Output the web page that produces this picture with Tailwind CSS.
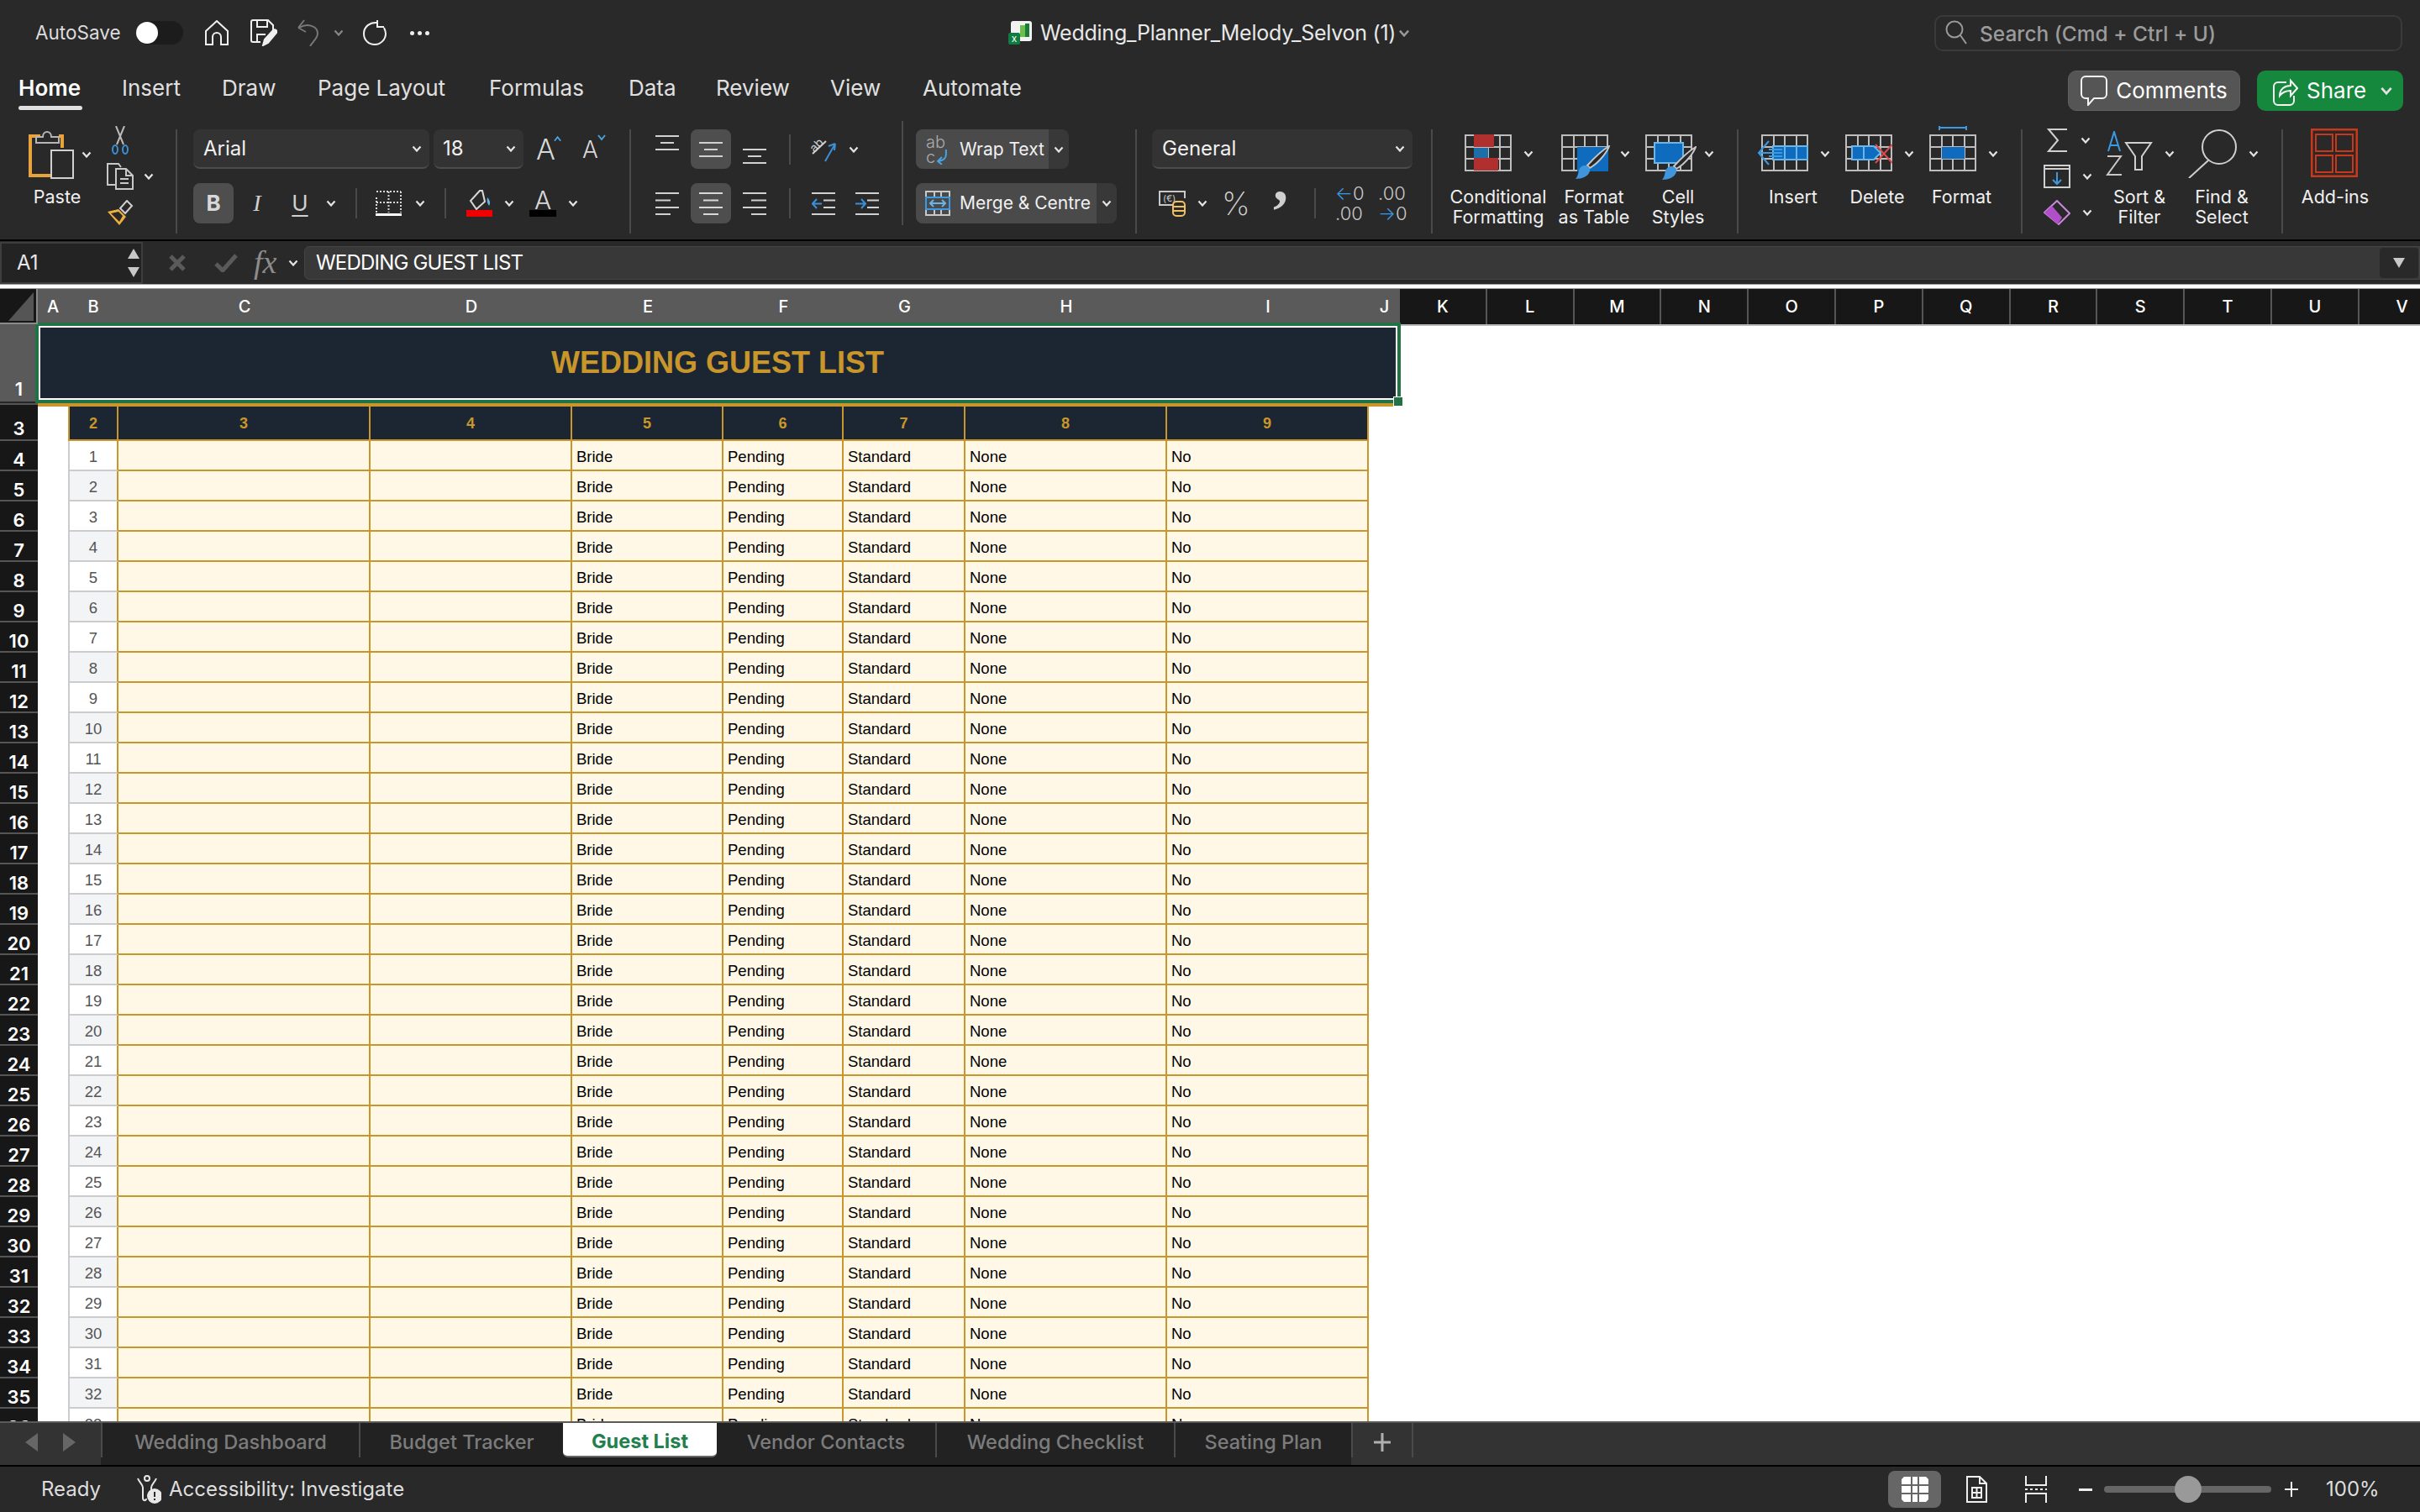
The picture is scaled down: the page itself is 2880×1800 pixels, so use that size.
<!DOCTYPE html>
<html lang="en">
<head>
<meta charset="utf-8">
<title>Wedding Planner</title>
<script src="https://cdn.jsdelivr.net/npm/@tailwindcss/browser@4"></script>
</head>
<body class="w-[2880px] h-[1800px] overflow-hidden bg-[#292929] text-[#e8e8e8] font-['Inter','Noto_Sans',sans-serif] [font-feature-settings:'calt'_0,'liga'_0]">
<svg class="hidden">
  <symbol id="chev" viewBox="0 0 12 8"><path d="M1.5 1.5 6 6.5l4.500-5" fill="none" stroke="#e4e4e4" stroke-width="2.200"/></symbol>
  <symbol id="grid" viewBox="0 0 56 44"><path d="M1 1h54v42H1zM1 15h54M1 29h54M15 1v42M28 1v42M42 1v42" fill="none" stroke="#bdbdbd" stroke-width="2"/></symbol>
  <symbol id="brush" viewBox="0 0 42 40"><path d="M41 1C39 7 30 20 18 27l-3-3C25 13 36 4 41 1z" fill="#292929" stroke="#c8c8c8" stroke-width="2"/><path d="M12 24c4 0 7 3 6 7-2 6-9 9-17 9 3-3 3-7 4-10 1-4 4-6 7-6z" fill="#3f96dc"/></symbol>
  <symbol id="alTop" viewBox="0 0 28 18"><path d="M0 1h28M6 9h16M0 17h28" stroke="#d0d0d0" stroke-width="2"/></symbol>
  <symbol id="alL" viewBox="0 0 28 27"><path d="M0 1h28M0 9.500h18M0 18h28M0 26h18" stroke="#d0d0d0" stroke-width="2"/></symbol>
  <symbol id="alC" viewBox="0 0 28 27"><path d="M0 1h28M5 9.500h18M0 18h28M5 26h18" stroke="#d8d8d8" stroke-width="2"/></symbol>
  <symbol id="alR" viewBox="0 0 28 27"><path d="M0 1h28M10 9.500h18M0 18h28M10 26h18" stroke="#d0d0d0" stroke-width="2"/></symbol>
</svg>

<div class="flex flex-col w-full h-full">

<!-- Title bar -->
<div class="flex items-center h-[78px] shrink-0">
  <div class="flex items-center w-[1200px] shrink-0">
    <span class="ml-[42px] w-[120px] text-[22.500px] text-[#dcdcdc]">AutoSave</span>
    <div class="w-[56px] h-[28px] rounded-full bg-[#1c1c1c] flex items-center"><div class="w-[26px] h-[26px] rounded-full bg-white"></div></div>
    <svg class="ml-[26px] w-[28px] h-[30px]" viewBox="0 0 28 30" fill="none" stroke="#f0f0f0" stroke-width="2"><path d="M1 13 14 1l13 12v16h-8v-9a5 5 0 0 0-10 0v9H1z"/></svg>
    <svg class="ml-[26px] w-[32px] h-[32px]" viewBox="0 0 32 32" fill="none" stroke="#f0f0f0" stroke-width="2"><path d="M12 27H3a2 2 0 0 1-2-2V3a2 2 0 0 1 2-2h18l6 6v7"/><path d="M8 1v8h12V1M8 27v-9h10"/><path d="M15 31l2-7 10-11c3-2 5 1 4 3L21 28z" fill="#f0f0f0"/></svg>
    <svg class="ml-[24px] w-[26px] h-[32px]" viewBox="0 0 26 32" fill="none" stroke="#777" stroke-width="2"><path d="M1 10 8 1M1 10l9 5M2 10c10-6 22-2 22 7 0 5-5 9-9 15"/></svg>
    <svg class="ml-[17px] w-[12px] h-[8px] opacity-50"><use href="#chev"/></svg>
    <svg class="ml-[23px] w-[28px] h-[30px]" viewBox="0 0 28 30" fill="none" stroke="#f0f0f0" stroke-width="2"><path d="M17 3C8 2 1 8 1 16s6 13 13 13 13-6 13-13c0-3-1-5-2-7M17 0v8h8"/></svg>
    <span class="ml-[28px] flex gap-[4px]"><i class="block w-[5px] h-[5px] rounded-full bg-[#eee]"></i><i class="block w-[5px] h-[5px] rounded-full bg-[#eee]"></i><i class="block w-[5px] h-[5px] rounded-full bg-[#eee]"></i></span>
  </div>
  <svg class="w-[30px] h-[28px]" viewBox="0 0 30 28"><rect x="3" y="0" width="25" height="24" rx="3" fill="#f2f2f2"/><path d="M14 5h6v14h-6z" fill="#6abf4b"/><path d="M20 3h5v16h-5z" fill="#1d7a3a"/><rect x="0" y="14" width="14" height="14" rx="2" fill="#107c41"/><text x="7" y="25" text-anchor="middle" font-size="12" fill="#fff" font-family="Liberation Sans">x</text></svg>
  <span class="ml-[8px] pt-[2px] text-[25px] tracking-[-0.25px] text-[#e8e8e8] whitespace-nowrap w-[426px]">Wedding_Planner_Melody_Selvon (1)</span>
  <svg class="w-[14px] h-[9px] opacity-60"><use href="#chev"/></svg>
  <div class="ml-[624px] w-[557px] h-[43px] rounded-[10px] border-2 border-[#3a3a3a] flex items-center">
    <svg class="ml-[11px] w-[27px] h-[30px]" viewBox="0 0 27 30" fill="none" stroke="#9a9a9a" stroke-width="2"><circle cx="11" cy="11" r="9.500"/><path d="m18 18 7 10"/></svg>
    <span class="ml-[14px] pt-[3px] text-[24.500px] font-medium text-[#9b9b9b] whitespace-nowrap">Search (Cmd + Ctrl + U)</span>
  </div>
</div>

<!-- Ribbon tabs -->
<div class="flex items-start h-[66px] shrink-0 text-[26px] leading-[36px] text-[#e0e0e0]">
  <div class="mt-[9px] ml-[22px] w-[123px] relative font-semibold text-white">Home<div class="absolute left-0 top-[39px] w-[76px] h-[5px] rounded-full bg-[#e0e0e0]"></div></div>
  <div class="mt-[9px] w-[119px]">Insert</div>
  <div class="mt-[9px] w-[114px]">Draw</div>
  <div class="mt-[9px] w-[204px]">Page Layout</div>
  <div class="mt-[9px] w-[166px]">Formulas</div>
  <div class="mt-[9px] w-[104px]">Data</div>
  <div class="mt-[9px] w-[136px]">Review</div>
  <div class="mt-[9px] w-[110px]">View</div>
  <div class="mt-[9px] w-[1363px]">Automate</div>
  <div class="mt-[6px] w-[205px] h-[48px] rounded-[10px] bg-[#555] border border-[#5f5f5f] flex items-center justify-center gap-[10px] text-white">
    <svg class="w-[32px] h-[36px]" viewBox="0 0 32 36" fill="none" stroke="#f2f2f2" stroke-width="2"><path d="M6 1h20a5 5 0 0 1 5 5v16a5 5 0 0 1-5 5h-10l-7 8v-8H6a5 5 0 0 1-5-5V6a5 5 0 0 1 5-5z"/></svg>
    <span>Comments</span>
  </div>
  <div class="mt-[6px] ml-[20px] w-[174px] h-[48px] rounded-[10px] bg-[#15883e] flex items-center pl-[19px] text-white">
    <svg class="w-[30px] h-[36px]" viewBox="0 0 30 36" fill="none" stroke="#f4f4f4" stroke-width="2"><path d="M16 8H6a5 5 0 0 0-5 5v17a5 5 0 0 0 5 5h14a5 5 0 0 0 5-5v-6"/><path d="M8 24c0-8 6-12 13-12V6l8 9-8 9v-6c-6 0-10 2-13 6z"/></svg>
    <span class="ml-[10px]">Share</span>
    <svg class="ml-[16px] w-[16px] h-[10px]"><use href="#chev"/></svg>
  </div>
</div>

<!-- Ribbon -->
<div class="flex h-[141px] shrink-0 text-[21.500px] text-[#f0f0f0] leading-[24px]">

  <!-- Clipboard -->
  <div class="w-[209px] shrink-0 flex pt-[10px]">
    <div class="w-[118px] shrink-0">
      <div class="flex items-center">
        <svg class="ml-[34px] w-[54px] h-[59px]" viewBox="0 0 54 59" fill="none"><path d="M14 8H2v47h26" stroke="#e8a33d" stroke-width="4"/><path d="M36 8h4v14" stroke="#e8a33d" stroke-width="4"/><path d="M9 16V9h8c0-8 10-8 10 0h9v7z" stroke="#b5b5b5" stroke-width="2"/><rect x="27" y="25" width="26" height="33" fill="#292929" stroke="#d0d0d0" stroke-width="2"/></svg>
        <svg class="ml-[9px] w-[12px] h-[8px]"><use href="#chev"/></svg>
      </div>
      <div class="ml-[34px] w-[68px] mt-[9px] text-center">Paste</div>
    </div>
    <div class="flex flex-col pl-[9px]">
      <svg class="-mt-[4px] ml-[5px] w-[22px] h-[34px]" viewBox="0 0 22 34" fill="none" stroke-width="2"><path d="M6 0l9 22M16 0 7 22" stroke="#bbb"/><ellipse cx="5" cy="28" rx="3" ry="5" stroke="#3b8fd6"/><ellipse cx="17" cy="28" rx="3" ry="5" stroke="#3b8fd6"/></svg>
      <div class="mt-[10px] flex items-center">
        <svg class="w-[32px] h-[32px]" viewBox="0 0 32 32" fill="none" stroke="#c8c8c8" stroke-width="2"><path d="M14 26H1V1h13l3 4"/><path d="M11 7h12l8 8v16H11z" fill="#292929"/><path d="M16 19h10M16 24h10M23 7v8h8"/></svg>
        <svg class="ml-[12px] w-[12px] h-[8px]"><use href="#chev"/></svg>
      </div>
      <svg class="mt-[12px] w-[32px] h-[30px]" viewBox="0 0 32 30"><path d="M24 1l6 6-8 9-6-6z" fill="none" stroke="#d0d0d0" stroke-width="2"/><path d="M1 14l13-3 9 9-8 10z" fill="#f0b040"/><path d="M5 16l9-2 5 5-4 7z" fill="#292929"/></svg>
    </div>
  </div>
  <div class="w-[2px] h-[124px] mt-[10px] bg-[#4a4a4a] shrink-0"></div>

  <!-- Font -->
  <div class="w-[538px] shrink-0 pt-[10px] pl-[19px]">
    <div class="flex items-center h-[47px]">
      <div class="w-[281px] h-[47px] rounded-[8px] bg-[#333] border-b-2 border-[#4c4c4c] flex items-center justify-between pl-[12px] pr-[9px] text-[24px]"><span>Arial</span><svg class="w-[12px] h-[8px]"><use href="#chev"/></svg></div>
      <div class="ml-[5px] w-[107px] h-[47px] rounded-[8px] bg-[#333] border-b-2 border-[#4c4c4c] flex items-center justify-between pl-[11px] pr-[9px] text-[24px]"><span>18</span><svg class="w-[12px] h-[8px]"><use href="#chev"/></svg></div>
      <div class="ml-[15px] w-[30px] flex items-start"><span class="text-[34px] leading-[34px] font-light text-[#d8d8d8]">A</span><svg class="-ml-[2px] w-[10px] h-[8px]" viewBox="0 0 10 8" fill="none" stroke="#4aa3e0" stroke-width="2"><path d="M1 7l4-5 4 5"/></svg></div>
      <div class="ml-[25px] w-[30px] flex items-start"><span class="text-[28px] leading-[36px] font-light text-[#d8d8d8]">A</span><svg class="-ml-[1px] w-[10px] h-[8px]" viewBox="0 0 10 8" fill="none" stroke="#4aa3e0" stroke-width="2"><path d="M1 1l4 5 4-5"/></svg></div>
    </div>
    <div class="flex items-center h-[48px] mt-[17px]">
      <div class="w-[48px] h-[48px] rounded-[8px] bg-[#4e4e4e] flex items-center justify-center text-[26px] font-bold text-[#d8d8d8]">B</div>
      <div class="w-[56px] text-center font-['Liberation_Serif',serif] italic text-[28px] text-[#d0d0d0]">I</div>
      <div class="w-[46px] text-center text-[26px] underline underline-offset-[5px] text-[#d0d0d0]">U</div>
      <div class="w-[28px] flex justify-center"><svg class="w-[12px] h-[8px]"><use href="#chev"/></svg></div>
      <div class="ml-[15px] w-[2px] h-[36px] bg-[#4a4a4a]"></div>
      <svg class="ml-[22px] w-[31px] h-[30px]" viewBox="0 0 31 30" fill="none" stroke="#d8d8d8" stroke-width="2"><path d="M1 1h29M1 8v18M30 1v25M15.500 1v25M1 14h29" stroke-dasharray="2 2"/><path d="M0 28.500h31" stroke="#fff" stroke-width="3"/></svg>
      <div class="w-[44px] flex justify-center"><svg class="w-[12px] h-[8px]"><use href="#chev"/></svg></div>
      <div class="ml-[7px] w-[2px] h-[36px] bg-[#4a4a4a]"></div>
      <div class="ml-[24px] w-[31px] flex flex-col items-center">
        <svg class="w-[28px] h-[24px]" viewBox="0 0 28 24" fill="none"><path d="M14 1l-11 12 7 10 10-9-3-13z" stroke="#d8d8d8" stroke-width="2"/><path d="M23 9c3 3 4 7 2 10-2-3-3-6-2-10z" fill="#6ab4e8"/></svg>
        <div class="w-[31px] h-[8px] bg-[#f00000]"></div>
      </div>
      <div class="w-[40px] flex justify-center"><svg class="w-[12px] h-[8px]"><use href="#chev"/></svg></div>
      <div class="ml-[4px] w-[32px] flex flex-col items-center">
        <span class="text-[30px] leading-[24px] font-light text-[#d8d8d8]">A</span>
        <div class="w-[32px] h-[8px] bg-black"></div>
      </div>
      <div class="w-[40px] flex justify-center"><svg class="w-[12px] h-[8px]"><use href="#chev"/></svg></div>
    </div>
  </div>
  <div class="w-[2px] h-[124px] mt-[10px] bg-[#4a4a4a] shrink-0"></div>

  <!-- Alignment -->
  <div class="w-[322px] shrink-0 pt-[10px] pl-[29px]">
    <div class="flex items-center h-[47px]">
      <svg class="w-[28px] h-[18px] -mt-[16px]"><use href="#alTop"/></svg>
      <div class="ml-[14px] w-[48px] h-[47px] rounded-[8px] bg-[#4e4e4e] flex items-center justify-center"><svg class="w-[28px] h-[18px]"><use href="#alTop"/></svg></div>
      <svg class="ml-[14px] w-[28px] h-[18px] mt-[16px]"><use href="#alTop"/></svg>
      <div class="ml-[27px] w-[2px] h-[36px] bg-[#4a4a4a]"></div>
      <svg class="ml-[23px] w-[32px] h-[30px]" viewBox="0 0 32 30" fill="none"><path d="M3 20 19 5" stroke="#d0d0d0" stroke-width="2"/><text x="1" y="15" font-size="14" fill="#d0d0d0" transform="rotate(-45 8 12)" font-family="Inter">ab</text><path d="M30 8 18 29M30 8l-1 8M30 8l-8 3" stroke="#3b8fd6" stroke-width="2"/></svg>
      <svg class="ml-[14px] w-[12px] h-[8px]"><use href="#chev"/></svg>
    </div>
    <div class="flex items-center h-[48px] mt-[17px]">
      <svg class="w-[28px] h-[27px]"><use href="#alL"/></svg>
      <div class="ml-[14px] w-[48px] h-[48px] rounded-[8px] bg-[#4e4e4e] flex items-center justify-center"><svg class="w-[28px] h-[27px]"><use href="#alC"/></svg></div>
      <svg class="ml-[14px] w-[28px] h-[27px]"><use href="#alR"/></svg>
      <div class="ml-[27px] w-[2px] h-[36px] bg-[#4a4a4a]"></div>
      <svg class="ml-[25px] w-[28px] h-[27px]" viewBox="0 0 28 27" fill="none" stroke-width="2"><path d="M0 1h28M14 9.500h14M14 18h14M0 26h28" stroke="#d0d0d0"/><path d="M12 13.500H1M6 8l-5 5.500L6 19" stroke="#3b8fd6"/></svg>
      <svg class="ml-[24px] w-[28px] h-[27px]" viewBox="0 0 28 27" fill="none" stroke-width="2"><path d="M0 1h28M14 9.500h14M14 18h14M0 26h28" stroke="#d0d0d0"/><path d="M0 13.500h11M7 8l5 5.500L7 19" stroke="#3b8fd6"/></svg>
    </div>
  </div>
  <div class="w-[2px] h-[124px] bg-[#4a4a4a] shrink-0"></div>

  <!-- Wrap / merge -->
  <div class="w-[276px] shrink-0 pt-[10px] pl-[15px]">
    <div class="flex h-[47px] w-[182px] rounded-[8px] overflow-hidden">
      <div class="w-[158px] bg-[#4a4a4a] flex items-center pl-[12px]">
        <div class="w-[28px] text-[20px] leading-[18px] text-[#aaa] font-light"><div>ab</div><div class="flex">c<svg class="ml-[1px] w-[16px] h-[18px]" viewBox="0 0 16 18" fill="none" stroke="#4aa3e0" stroke-width="2"><path d="M12 0v6c0 5-3 7-9 8M7 9 2 14l5 4"/></svg></div></div>
        <span class="ml-[12px] text-[21px] whitespace-nowrap">Wrap Text</span>
      </div>
      <div class="w-[24px] bg-[#383838] flex items-center justify-center"><svg class="w-[12px] h-[8px]"><use href="#chev"/></svg></div>
    </div>
    <div class="flex h-[48px] w-[239px] rounded-[8px] overflow-hidden mt-[17px]">
      <div class="w-[215px] bg-[#4a4a4a] flex items-center pl-[11px]">
        <svg class="w-[30px] h-[30px] shrink-0" viewBox="0 0 30 30" fill="none" stroke-width="2"><path d="M1 1h28v28H1zM1 8h28M1 22h28M11 1v7M19 1v7M11 22v7M19 22v7" stroke="#c8c8c8"/><rect x="1" y="8" width="28" height="14" stroke="#3b9ae1"/><path d="M6 15h18M10 11l-4 4 4 4M20 11l4 4-4 4" stroke="#6ab4e8"/></svg>
        <span class="ml-[11px] text-[21px] whitespace-nowrap">Merge &amp; Centre</span>
      </div>
      <div class="w-[24px] bg-[#383838] flex items-center justify-center"><svg class="w-[12px] h-[8px]"><use href="#chev"/></svg></div>
    </div>
  </div>
  <div class="w-[2px] h-[124px] mt-[10px] bg-[#4a4a4a] shrink-0"></div>

  <!-- Number -->
  <div class="w-[350px] shrink-0 pt-[10px] pl-[18px]">
    <div class="w-[310px] h-[47px] rounded-[8px] bg-[#333] border-b-2 border-[#4c4c4c] flex items-center justify-between pl-[12px] pr-[9px] text-[24px]"><span>General</span><svg class="w-[12px] h-[8px]"><use href="#chev"/></svg></div>
    <div class="flex items-center h-[48px] mt-[17px]">
      <svg class="ml-[8px] w-[32px] h-[32px]" viewBox="0 0 32 32" fill="none" stroke-width="2"><path d="M18 18H1V2h30v8" stroke="#c8c8c8"/><text x="5" y="14" font-size="11" fill="#c8c8c8" font-family="Inter">(€)</text><rect x="17" y="14" width="14" height="17" rx="4" fill="#292929" stroke="#f0c060"/><path d="M17 20h14M17 25h14" stroke="#f0c060"/></svg>
      <svg class="ml-[14px] w-[12px] h-[8px]"><use href="#chev"/></svg>
      <span class="ml-[17px] w-[32px] text-[38px] leading-[38px] font-extralight text-[#d0d0d0]">%</span>
      <span class="ml-[29px] w-[18px] font-['Liberation_Serif',serif] font-bold text-[72px] leading-[40px] -translate-y-[27px] text-[#cfcfcf]">,</span>
      <div class="ml-[31px] w-[2px] h-[36px] bg-[#4a4a4a]"></div>
      <div class="ml-[23px] w-[32px] text-[22px] leading-[24px] font-light text-[#c8c8c8] text-right"><div><span class="text-[#3b9ae1]">←</span>0</div><div>.00</div></div>
      <div class="ml-[19px] w-[32px] text-[22px] leading-[24px] font-light text-[#c8c8c8] text-right"><div>.00</div><div><span class="text-[#3b9ae1]">→</span>0</div></div>
    </div>
  </div>
  <div class="w-[2px] h-[124px] mt-[10px] bg-[#4a4a4a] shrink-0"></div>

  <!-- Styles -->
  <div class="w-[362px] shrink-0 pt-[6px]">
    <div class="flex h-[72px]">
      <svg class="ml-[38px] mt-[10px] w-[56px] h-[44px]" viewBox="0 0 56 44"><use href="#grid" width="56" height="44"/><rect x="11" y="0" width="24" height="15" fill="#b03030"/><rect x="11" y="16" width="17" height="12" fill="#1d6fa8"/><rect x="11" y="28" width="29" height="15" fill="#b03030"/></svg>
      <svg class="ml-[14px] mt-[29px] w-[12px] h-[8px]"><use href="#chev"/></svg>
      <svg class="ml-[33px] mt-[10px] w-[66px] h-[54px]" viewBox="0 0 66 54"><svg width="56" height="44"><use href="#grid" width="56" height="44"/></svg><rect x="19" y="15" width="37" height="29" fill="#0e6bbd"/><use href="#brush" x="16" y="13" width="42" height="40"/></svg>
      <svg class="ml-[4px] mt-[29px] w-[12px] h-[8px]"><use href="#chev"/></svg>
      <svg class="ml-[18px] mt-[10px] w-[66px] h-[54px]" viewBox="0 0 66 54"><svg width="56" height="44"><use href="#grid" width="56" height="44"/></svg><rect x="11" y="10" width="34" height="24" fill="#0e6bbd" stroke="#6ab4e8" stroke-width="2"/><use href="#brush" x="19" y="14" width="42" height="40"/></svg>
      <svg class="ml-[4px] mt-[29px] w-[12px] h-[8px]"><use href="#chev"/></svg>
    </div>
    <div class="flex">
      <div class="ml-[20px] w-[116px] text-center">Conditional Formatting</div>
      <div class="w-[112px] text-center">Format<br>as Table</div>
      <div class="w-[88px] text-center">Cell<br>Styles</div>
    </div>
  </div>
  <div class="w-[2px] h-[124px] mt-[10px] bg-[#4a4a4a] shrink-0"></div>

  <!-- Cells -->
  <div class="w-[336px] shrink-0 pt-[6px]">
    <div class="flex h-[72px]">
      <svg class="ml-[27px] mt-[10px] w-[56px] h-[44px] overflow-visible" viewBox="0 0 56 44"><use href="#grid" width="56" height="44"/><rect x="14" y="14" width="41" height="16" fill="#0e6bbd" stroke="#6ab4e8" stroke-width="2"/><path d="M28 14v16M42 14v16" stroke="#6ab4e8" stroke-width="2"/><path d="M25 22H-2M9 8-3 22l12 14M9 18h16M9 26h16" fill="none" stroke="#3b9ae1" stroke-width="2"/></svg>
      <svg class="ml-[14px] mt-[29px] w-[12px] h-[8px]"><use href="#chev"/></svg>
      <svg class="ml-[18px] mt-[10px] w-[56px] h-[44px]" viewBox="0 0 56 44"><use href="#grid" width="56" height="44"/><path d="M8 14h26l8 8-8 8H8z" fill="#0e6bbd" stroke="#6ab4e8" stroke-width="2"/><path d="M22 14v16" stroke="#6ab4e8" stroke-width="2"/><path d="M36 12l20 22M56 12 36 34" stroke="#e04a4a" stroke-width="2"/></svg>
      <svg class="ml-[14px] mt-[29px] w-[12px] h-[8px]"><use href="#chev"/></svg>
      <svg class="ml-[18px] mt-[10px] w-[56px] h-[44px] overflow-visible" viewBox="0 0 56 44"><use href="#grid" width="56" height="44"/><rect x="15" y="15" width="27" height="14" fill="#0e6bbd"/><path d="M12-8h32M12-10v5M44-10v5" stroke="#3b9ae1" stroke-width="2"/></svg>
      <svg class="ml-[14px] mt-[29px] w-[12px] h-[8px]"><use href="#chev"/></svg>
    </div>
    <div class="flex pl-[15px]">
      <div class="w-[100px] text-center">Insert</div>
      <div class="w-[100px] text-center">Delete</div>
      <div class="w-[101px] text-center">Format</div>
    </div>
  </div>
  <div class="w-[2px] h-[124px] mt-[10px] bg-[#4a4a4a] shrink-0"></div>

  <!-- Editing -->
  <div class="w-[308px] shrink-0 flex pt-[6px]">
    <div class="w-[87px] shrink-0 pl-[25px]">
      <div class="flex items-center h-[34px]">
        <svg class="ml-[4px] w-[24px] h-[28px]" viewBox="0 0 24 28" fill="none" stroke="#d0d0d0" stroke-width="2"><path d="M24 1H2l11 13L2 27h22"/></svg>
        <svg class="ml-[16px] w-[12px] h-[8px]"><use href="#chev"/></svg>
      </div>
      <div class="flex items-center h-[28px] mt-[12px]">
        <svg class="w-[32px] h-[28px]" viewBox="0 0 32 28" fill="none" stroke-width="2"><path d="M1 1h30v26H1zM1 5h30" stroke="#d0d0d0"/><path d="M16 9v14M11 18l5 5 5-5" stroke="#3b9ae1"/></svg>
        <svg class="ml-[14px] w-[12px] h-[8px]"><use href="#chev"/></svg>
      </div>
      <div class="flex items-center h-[30px] mt-[14px]">
        <svg class="w-[32px] h-[30px]" viewBox="0 0 32 30"><path d="M16 1 31 16 18 29 1 15z" fill="none" stroke="#c78ad8" stroke-width="2"/><path d="M1 15l9-8 12 14-5 8z" fill="#b04fc8"/></svg>
        <svg class="ml-[14px] w-[12px] h-[8px]"><use href="#chev"/></svg>
      </div>
    </div>
    <div>
      <div class="flex h-[72px]">
        <svg class="ml-[12px] mt-[6px] w-[56px] h-[54px]" viewBox="0 0 56 54" fill="none" stroke-width="2"><path d="M3 24 10 1l7 23M5 17h10" stroke="#3b9ae1"/><path d="M2 30h16L2 52h17" stroke="#c8c8c8"/><path d="M24 14h30L43 30v16h-8V30z" stroke="#d0d0d0"/></svg>
        <svg class="ml-[14px] mt-[29px] w-[12px] h-[8px]"><use href="#chev"/></svg>
        <svg class="ml-[16px] mt-[4px] w-[58px] h-[58px]" viewBox="0 0 58 58" fill="none" stroke="#d0d0d0" stroke-width="2"><ellipse cx="37" cy="21" rx="20" ry="20"/><path d="M24 37 1 58"/></svg>
        <svg class="ml-[14px] mt-[29px] w-[12px] h-[8px]"><use href="#chev"/></svg>
      </div>
      <div class="flex">
        <div class="ml-[4px] w-[96px] text-center">Sort &amp;<br>Filter</div>
        <div class="w-[100px] text-center">Find &amp;<br>Select</div>
      </div>
    </div>
  </div>
  <div class="w-[2px] h-[124px] mt-[10px] bg-[#4a4a4a] shrink-0"></div>

  <!-- Add-ins -->
  <div class="pt-[9px]">
    <svg class="ml-[33px] w-[56px] h-[58px]" viewBox="0 0 56 58" fill="none" stroke="#c9381a" stroke-width="2"><rect x="1" y="1" width="54" height="56" stroke-width="3"/><rect x="6" y="7" width="20" height="20"/><rect x="30" y="7" width="20" height="20"/><rect x="6" y="32" width="20" height="20"/><rect x="30" y="32" width="20" height="20"/></svg>
    <div class="ml-[12px] w-[100px] mt-[11px] text-center">Add-ins</div>
  </div>
</div>

<div class="h-[2px] bg-black shrink-0"></div>

<!-- Formula bar -->
<div class="flex items-center h-[51px] shrink-0">
  <div class="w-[170px] h-[50px] border-2 border-[#3d3d3d] bg-[#232323] flex items-center justify-between pl-[18px] pr-[2px] text-[24px]">
    <span>A1</span>
    <div class="flex flex-col gap-[8px]">
      <svg class="w-[14px] h-[14px]" viewBox="0 0 14 14"><path d="M7 1 14 13H0z" fill="#c8c8c8"/></svg>
      <svg class="w-[14px] h-[14px]" viewBox="0 0 14 14"><path d="M7 13 14 1H0z" fill="#c8c8c8"/></svg>
    </div>
  </div>
  <svg class="ml-[31px] w-[20px] h-[20px]" viewBox="0 0 20 20" fill="none" stroke="#5a5a5a" stroke-width="5"><path d="M2 2l16 16M18 2 2 18"/></svg>
  <svg class="ml-[34px] w-[28px] h-[22px]" viewBox="0 0 28 22" fill="none" stroke="#5a5a5a" stroke-width="5"><path d="M2 12l8 8L26 2"/></svg>
  <span class="ml-[19px] w-[32px] font-['Liberation_Serif',serif] italic text-[38px] text-[#8c8c8c] whitespace-nowrap">fx</span>
  <svg class="ml-[9px] w-[12px] h-[8px]"><use href="#chev"/></svg>
  <div class="ml-[7px] flex-1 h-[40px] rounded-l-[6px] bg-[#383838] border border-[#444] flex items-center justify-between text-[24px] tracking-[-0.8px] text-white pl-[13px]">
    <span class="whitespace-nowrap">WEDDING GUEST LIST</span>
    <div class="w-[46px] h-[36px] mr-[1px] rounded-[4px] bg-[#292929] flex items-center justify-center"><svg class="w-[14px] h-[12px]" viewBox="0 0 14 12"><path d="M7 12 14 0H0z" fill="#c8c8c8"/></svg></div>
  </div>
</div>
<div class="h-[6px] shrink-0 bg-white border-y border-[#9c9c9c]"></div>

<!-- Sheet -->
<div class="flex-1 min-h-0 overflow-hidden bg-white">
  <!-- Column headers -->
  <div class="flex h-[40px] text-[20px] font-medium text-white text-center leading-[42px]">
    <div class="w-[45px] h-[42px] relative z-10 bg-[#171717] border-r-2 border-b-2 border-[#8a8a8a] flex items-end justify-end"><svg class="w-[30px] h-[34px] mb-[2px] mr-[3px]" viewBox="0 0 30 34"><path d="M30 0v34H0z" fill="#555"/></svg></div>
    <div class="flex bg-[#5a5a5a]">
      <div class="w-[36px]">A</div><div class="w-[60px]">B</div><div class="w-[300px]">C</div><div class="w-[240px]">D</div><div class="w-[180px]">E</div><div class="w-[143px]">F</div><div class="w-[145px]">G</div><div class="w-[240px]">H</div><div class="w-[240px]">I</div><div class="w-[37px]">J</div>
    </div>
    <div class="flex-1 h-[44px] flex bg-[#171717] border-b-[2px] border-[#b8b8b8] overflow-hidden [&>div]:shrink-0 [&>div]:w-[103.800px] [&>div]:border-r-2 [&>div]:border-[#555]">
      <div>K</div><div>L</div><div>M</div><div>N</div><div>O</div><div>P</div><div>Q</div><div>R</div><div>S</div><div>T</div><div>U</div><div>V</div>
    </div>
  </div>
  <div class="flex">
    <!-- Row headers -->
    <div class="w-[45px] shrink-0 text-[22px] font-semibold text-white text-center">
      <div class="h-[94px] bg-[#5a5a5a] flex items-end justify-center leading-[30px]">1</div>
      <div class="h-[4px] bg-[#262626] border-b-2 border-[#555]"></div>
      <div class="h-[43px] bg-[#171717] border-b-2 border-[#555] leading-[56px]">3</div>
      <div class="bg-[#171717] [&>div]:h-[36px] [&>div]:border-b-2 [&>div]:border-[#555] [&>div]:leading-[45px]">
        <div>4</div><div>5</div><div>6</div><div>7</div><div>8</div><div>9</div><div>10</div><div>11</div><div>12</div><div>13</div><div>14</div><div>15</div><div>16</div><div>17</div><div>18</div><div>19</div><div>20</div><div>21</div><div>22</div><div>23</div><div>24</div><div>25</div><div>26</div><div>27</div><div>28</div><div>29</div><div>30</div><div>31</div><div>32</div><div>33</div><div>34</div><div>35</div><div>36</div>
      </div>
    </div>
    <!-- Cells -->
    <div class="flex-1 min-w-0">
      <div class="relative w-[1621px] h-[100px] bg-[#1b2632] border-b-4 border-[#c8962a] flex items-center justify-center font-['Liberation_Sans',Arial,sans-serif] font-bold text-[36px] text-[#c8962a] pb-[1px] pr-[3px]">
        WEDDING GUEST LIST
        <div class="absolute -left-[3px] top-0 -right-[1px] bottom-0 border-4 border-[#217346]"><div class="w-full h-full border-2 border-white"></div></div>
        <div class="absolute -right-[4px] -bottom-[4px] w-[12px] h-[12px] bg-[#217346] border border-white"></div>
      </div>
      <table class="ml-[36px] w-[1548px] table-fixed border-separate border-spacing-0 font-['Liberation_Sans',Arial,sans-serif] text-[18.500px] text-black [&_td]:h-[36px] [&_td]:p-0 [&_td]:pt-[4px] [&_td]:pl-[5px] [&_td]:border-r-2 [&_td]:border-b-2 [&_td]:border-[#c8962a] [&_td]:bg-[#fff8e7] [&_td:first-child]:pl-0 [&_td:first-child]:text-center [&_td:first-child]:text-[#555] [&_td:first-child]:bg-white [&_td:first-child]:border-l-2 [&_td:first-child]:border-l-[#ccc] [&_td:first-child]:border-b-[#ccc] [&_tr:nth-child(even)_td:first-child]:bg-[#f3f4f6]">
        <colgroup><col class="w-[60px]"><col class="w-[300px]"><col class="w-[240px]"><col class="w-[180px]"><col class="w-[143px]"><col class="w-[145px]"><col class="w-[240px]"><col class="w-[240px]"></colgroup>
        <thead class="[&_th]:h-[41px] [&_th]:bg-[#1b2632] [&_th]:text-[#c8962a] [&_th]:border-r-2 [&_th]:border-b-2 [&_th]:border-[#c8962a] [&_th]:font-bold [&_th]:text-[18px] [&_th]:pt-[2px]">
          <tr><th class="border-l-2">2</th><th>3</th><th>4</th><th>5</th><th>6</th><th>7</th><th>8</th><th>9</th></tr>
        </thead>
        <tbody>
          <tr><td>1</td><td></td><td></td><td>Bride</td><td>Pending</td><td>Standard</td><td>None</td><td>No</td></tr>
          <tr><td>2</td><td></td><td></td><td>Bride</td><td>Pending</td><td>Standard</td><td>None</td><td>No</td></tr>
          <tr><td>3</td><td></td><td></td><td>Bride</td><td>Pending</td><td>Standard</td><td>None</td><td>No</td></tr>
          <tr><td>4</td><td></td><td></td><td>Bride</td><td>Pending</td><td>Standard</td><td>None</td><td>No</td></tr>
          <tr><td>5</td><td></td><td></td><td>Bride</td><td>Pending</td><td>Standard</td><td>None</td><td>No</td></tr>
          <tr><td>6</td><td></td><td></td><td>Bride</td><td>Pending</td><td>Standard</td><td>None</td><td>No</td></tr>
          <tr><td>7</td><td></td><td></td><td>Bride</td><td>Pending</td><td>Standard</td><td>None</td><td>No</td></tr>
          <tr><td>8</td><td></td><td></td><td>Bride</td><td>Pending</td><td>Standard</td><td>None</td><td>No</td></tr>
          <tr><td>9</td><td></td><td></td><td>Bride</td><td>Pending</td><td>Standard</td><td>None</td><td>No</td></tr>
          <tr><td>10</td><td></td><td></td><td>Bride</td><td>Pending</td><td>Standard</td><td>None</td><td>No</td></tr>
          <tr><td>11</td><td></td><td></td><td>Bride</td><td>Pending</td><td>Standard</td><td>None</td><td>No</td></tr>
          <tr><td>12</td><td></td><td></td><td>Bride</td><td>Pending</td><td>Standard</td><td>None</td><td>No</td></tr>
          <tr><td>13</td><td></td><td></td><td>Bride</td><td>Pending</td><td>Standard</td><td>None</td><td>No</td></tr>
          <tr><td>14</td><td></td><td></td><td>Bride</td><td>Pending</td><td>Standard</td><td>None</td><td>No</td></tr>
          <tr><td>15</td><td></td><td></td><td>Bride</td><td>Pending</td><td>Standard</td><td>None</td><td>No</td></tr>
          <tr><td>16</td><td></td><td></td><td>Bride</td><td>Pending</td><td>Standard</td><td>None</td><td>No</td></tr>
          <tr><td>17</td><td></td><td></td><td>Bride</td><td>Pending</td><td>Standard</td><td>None</td><td>No</td></tr>
          <tr><td>18</td><td></td><td></td><td>Bride</td><td>Pending</td><td>Standard</td><td>None</td><td>No</td></tr>
          <tr><td>19</td><td></td><td></td><td>Bride</td><td>Pending</td><td>Standard</td><td>None</td><td>No</td></tr>
          <tr><td>20</td><td></td><td></td><td>Bride</td><td>Pending</td><td>Standard</td><td>None</td><td>No</td></tr>
          <tr><td>21</td><td></td><td></td><td>Bride</td><td>Pending</td><td>Standard</td><td>None</td><td>No</td></tr>
          <tr><td>22</td><td></td><td></td><td>Bride</td><td>Pending</td><td>Standard</td><td>None</td><td>No</td></tr>
          <tr><td>23</td><td></td><td></td><td>Bride</td><td>Pending</td><td>Standard</td><td>None</td><td>No</td></tr>
          <tr><td>24</td><td></td><td></td><td>Bride</td><td>Pending</td><td>Standard</td><td>None</td><td>No</td></tr>
          <tr><td>25</td><td></td><td></td><td>Bride</td><td>Pending</td><td>Standard</td><td>None</td><td>No</td></tr>
          <tr><td>26</td><td></td><td></td><td>Bride</td><td>Pending</td><td>Standard</td><td>None</td><td>No</td></tr>
          <tr><td>27</td><td></td><td></td><td>Bride</td><td>Pending</td><td>Standard</td><td>None</td><td>No</td></tr>
          <tr><td>28</td><td></td><td></td><td>Bride</td><td>Pending</td><td>Standard</td><td>None</td><td>No</td></tr>
          <tr><td>29</td><td></td><td></td><td>Bride</td><td>Pending</td><td>Standard</td><td>None</td><td>No</td></tr>
          <tr><td>30</td><td></td><td></td><td>Bride</td><td>Pending</td><td>Standard</td><td>None</td><td>No</td></tr>
          <tr><td>31</td><td></td><td></td><td>Bride</td><td>Pending</td><td>Standard</td><td>None</td><td>No</td></tr>
          <tr><td>32</td><td></td><td></td><td>Bride</td><td>Pending</td><td>Standard</td><td>None</td><td>No</td></tr>
          <tr><td>33</td><td></td><td></td><td>Bride</td><td>Pending</td><td>Standard</td><td>None</td><td>No</td></tr>
        </tbody>
      </table>
    </div>
  </div>
</div>

<!-- Sheet tabs -->
<div class="flex h-[52px] shrink-0 bg-[#333] border-t-2 border-[#5a5a5a] text-[23.500px] font-medium text-[#7c7c7c]">
  <div class="w-[120px] flex items-center justify-center gap-[30px] pb-[4px]">
    <svg class="w-[15px] h-[22px]" viewBox="0 0 15 22"><path d="M15 0 0 11l15 11z" fill="#666"/></svg>
    <svg class="w-[15px] h-[22px]" viewBox="0 0 15 22"><path d="M0 0l15 11L0 22z" fill="#666"/></svg>
  </div>
  <div class="flex w-[1488px] bg-[#222] [&>div]:h-[41px] [&>div]:pt-[5px] [&>div]:flex [&>div]:items-center [&>div]:justify-center [&>div]:border-l-2 [&>div]:border-[#4a4a4a]">
    <div class="w-[307px]">Wedding Dashboard</div>
    <div class="w-[243px]">Budget Tracker</div>
    <div class="w-[183px] bg-white !border-l-0 rounded-b-[6px] border-b-2 !border-b-[#666] text-[#22804f] font-bold">Guest List</div>
    <div class="w-[260px] !border-l-0">Vendor Contacts</div>
    <div class="w-[284px]">Wedding Checklist</div>
    <div class="w-[211px]">Seating Plan</div>
  </div>
  <div class="w-[74px] h-[41px] pt-[5px] border-x-2 border-[#4a4a4a] flex items-center justify-center">
    <svg class="w-[20px] h-[22px]" viewBox="0 0 20 22" fill="none" stroke="#b0b0b0" stroke-width="3"><path d="M10 0v22M0 11h20"/></svg>
  </div>
</div>
<div class="h-[2px] bg-black shrink-0"></div>

<!-- Status bar -->
<div class="flex items-center h-[54px] shrink-0 text-[24px] text-[#dedede]">
  <span class="ml-[49px] w-[113px]">Ready</span>
  <svg class="w-[30px] h-[34px]" viewBox="0 0 30 34" fill="none" stroke="#e8e8e8" stroke-width="2"><circle cx="13" cy="4" r="3"/><path d="M2 4c2 5 6 7 6 11v12c0 4 4 4 4 1M24 4c-2 5-6 7-6 11v6"/><circle cx="22" cy="25" r="8" fill="#e8e8e8"/><path d="M22 20v6M22 28v2" stroke="#292929"/></svg>
  <span class="ml-[9px] whitespace-nowrap w-[2046px]">Accessibility: Investigate</span>
  <div class="w-[63px] h-[44px] rounded-[8px] bg-[#666] flex items-center justify-center">
    <svg class="w-[32px] h-[30px]" viewBox="0 0 32 30" fill="#fff"><path d="M3 0h8v9H0V3zM13 0h6v9h-6zM21 0h8l3 3v6H21zM0 11h11v8H0zM13 11h6v8h-6zM21 11h11v8H21zM0 21h11v9H3l-3-3zM13 21h6v9h-6zM21 21h11v6l-3 3h-8z"/></svg>
  </div>
  <svg class="ml-[30px] w-[25px] h-[32px]" viewBox="0 0 25 32" fill="none" stroke="#eee" stroke-width="2"><path d="M1 1h15l8 8v22H1zM16 1v8h8"/><rect x="7" y="14" width="11" height="12"/><path d="M7 20h11M12.500 14v12"/></svg>
  <svg class="ml-[43px] w-[30px] h-[32px]" viewBox="0 0 30 32" fill="none" stroke="#eee" stroke-width="2"><path d="M3 0v11h24V0M3 32V21h24v11"/><path d="M2 16h26" stroke-dasharray="3 3"/></svg>
  <div class="ml-[36px] w-[16px] h-[3px] bg-[#eee]"></div>
  <div class="ml-[14px] w-[199px] h-[8px] rounded-full bg-[#666] flex items-center">
    <div class="ml-[84px] w-[32px] h-[32px] shrink-0 rounded-full bg-[#999]"></div>
  </div>
  <svg class="ml-[16px] w-[16px] h-[18px]" viewBox="0 0 16 18" fill="none" stroke="#eee" stroke-width="2"><path d="M8 0v18M0 9h16"/></svg>
  <span class="ml-[33px] whitespace-nowrap">100%</span>
</div>

</div>
</body>
</html>
